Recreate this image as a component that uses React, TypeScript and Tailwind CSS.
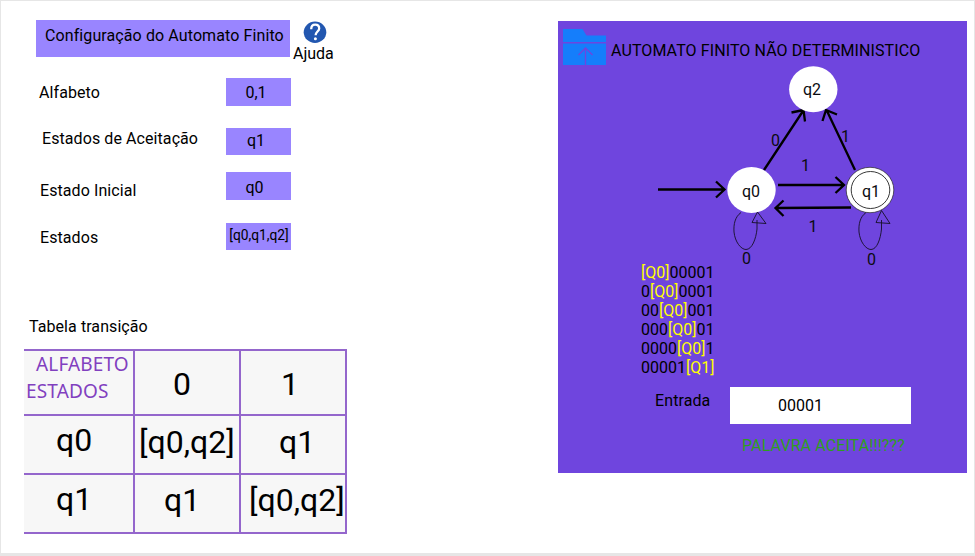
import type { ReactNode } from "react";

const params = [
  { label: "Alfabeto", value: "0,1", row: "mt-[21px] h-[28px]", lab: "pl-[3px] pt-[5px]", box: "h-[28px] pt-[5px]", txt: "text-[16px] pr-[5px]" },
  { label: "Estados de Aceitação", value: "q1", row: "mt-[22px] h-[27px]", lab: "pl-[6px] pt-[1px]", box: "h-[27px] pt-[3px]", txt: "text-[16px] pr-[5px]" },
  { label: "Estado Inicial", value: "q0", row: "mt-[17px] h-[28px]", lab: "pl-[4px] pt-[9px]", box: "h-[28px] pt-[6px]", txt: "text-[16px] pr-[8px]" },
  { label: "Estados", value: "[q0,q1,q2]", row: "mt-[23px] h-[27px]", lab: "pl-[4px] pt-[5px]", box: "h-[27px] pt-[2px]", txt: "text-[13.8px] pl-px" },
];

const steps = [
  ["", "[Q0]", "00001"],
  ["0", "[Q0]", "0001"],
  ["00", "[Q0]", "001"],
  ["000", "[Q0]", "01"],
  ["0000", "[Q0]", "1"],
  ["00001", "[Q1]", ""],
];

function Cell({ className, children }: { className: string; children: ReactNode }) {
  return (
    <div className={`border-b-2 border-r-2 border-[#9466cc] text-[32px] leading-[38px] whitespace-nowrap ${className}`}>
      {children}
    </div>
  );
}

function HelpIcon() {
  return (
    <svg width="24" height="24" viewBox="0 0 24 24" className="block">
      <ellipse cx="12" cy="11.3" rx="11.3" ry="10.7" fill="#2257b0" />
      <path d="M8.200 8.200C8.200 5 9.600 3.600 12.200 3.600s4 1.500 4 3.800c0 3-3.600 3.400-3.600 6.900" fill="none" stroke="#fff" strokeWidth="2.300" />
      <circle cx="12.400" cy="17.800" r="1.500" fill="#fff" />
    </svg>
  );
}

function FolderIcon() {
  return (
    <svg width="43" height="37" viewBox="0 0 43 37" className="block">
      <path d="M0 0h19.500l4 6.500h19.500v6.500H0zM0 14.500h43V36H0z" fill="#157efb" />
      <path d="M22.500 36V19M15.500 26l7-7 7 7" fill="none" stroke="#6f45de" strokeWidth="1.300" />
    </svg>
  );
}

function Diagram() {
  return (
    <svg width="260" height="205" viewBox="650 64 260 205" className="block" fontFamily="Roboto, sans-serif" fontSize="16">
      <g fill="none" stroke="#000" strokeWidth="2.300">
        <path d="M658 189.500H724M716 181.500l8.500 8-8.500 8" />
        <path d="M764 170L803 111M791.500 112.500l12-2.500 1.500 11.500" />
        <path d="M855 170L827 111M822.500 121l3.500-11 11 4.500" />
        <path d="M778 185H843M835.500 177l8.500 8-8.500 8" />
        <path d="M851 207.500L776 208M783.500 200.500l-8 7.500 8 8" />
      </g>
      <ellipse cx="813.300" cy="89.300" rx="24.200" ry="23" fill="#fff" />
      <ellipse cx="751.500" cy="190" rx="24.200" ry="23" fill="#fff" />
      <ellipse cx="870" cy="190" rx="23.800" ry="22.700" fill="#fff" stroke="#222" strokeWidth="0.700" />
      <ellipse cx="870.500" cy="190" rx="19.300" ry="18.500" fill="none" stroke="#222" strokeWidth="0.900" />
      <g fill="none" stroke="#151026" strokeWidth="0.900">
        <path d="M741 212.500C735 217 733.500 224 734 232C735 242 741 249.500 746 249.500C752 249.500 756 239 757 229V220M757.500 212l-5.500 10.500 14 1z" />
        <path d="M866 212.500C860 217 858.500 224 859 232C860 242 866 249.500 871 249.500C877 249.500 880.500 239 881.500 229V220M881.500 210.500l-5.500 12 14 1z" />
      </g>
      <g fill="#0b0b10">
        <text x="803" y="95">q2</text>
        <text x="742" y="197">q0</text>
        <text x="862" y="197">q1</text>
        <text x="771" y="146">0</text>
        <text x="841" y="142">1</text>
        <text x="801" y="171">1</text>
        <text x="808.500" y="231.500">1</text>
        <text x="742" y="264">0</text>
        <text x="867" y="265">0</text>
      </g>
    </svg>
  );
}

export default function App() {
  return (
    <div className="flex h-[556px] w-[975px] overflow-hidden border-b-[3px] border-l border-r border-t border-[#e6e6e6] bg-white font-['Roboto',sans-serif] text-[16px] leading-[19px] text-black">
      <section className="w-[557px] shrink-0 pt-[19px]">
        <div className="flex">
          <h1 className="ml-[35px] h-[37px] w-[254px] whitespace-nowrap bg-[#9985ff] pl-[9px] pt-[6px] tracking-[0.1px]">Configuração do Automato Finito</h1>
          <div className="ml-[3px] h-[44px] w-[44px]">
            <div className="pl-[10px] pt-px"><HelpIcon /></div>
            <div className="-mt-px">Ajuda</div>
          </div>
        </div>
        <div className="-mt-[7px] ml-[35px] w-[255px]">
          {params.map((p) => (
            <div key={p.label} className={`flex items-start justify-between ${p.row}`}>
              <span className={`tracking-[0.08px] ${p.lab}`}>{p.label}</span>
              <div className={`w-[65px] bg-[#9985ff] text-center ${p.box}`}>
                <span className={p.txt}>{p.value}</span>
              </div>
            </div>
          ))}
        </div>
        <h2 className="ml-[28px] mt-[67px] tracking-[0.07px]">Tabela transição</h2>
        <div className="ml-[23px] mt-[13px] grid w-[323px] grid-cols-[111px_106px_106px] grid-rows-[65px_59px_59px] border-t-2 border-[#9466cc] bg-[#f7f7f7]">
          <div className="border-b-2 border-r-2 border-[#9466cc] font-['Noto_Sans',sans-serif] text-[19px] leading-[27px] tracking-[0.15px] text-[#8140bf]">
            <div className="pl-[12px]">ALFABETO</div>
            <div className="pl-[2px]">ESTADOS</div>
          </div>
          <Cell className="pl-[38px] pt-[14px]">0</Cell>
          <Cell className="pl-[40px] pt-[14px]">1</Cell>
          <Cell className="pl-[32px] pt-[5px]">q0</Cell>
          <Cell className="pl-[4px] pt-[7px]">[q0,q2]</Cell>
          <Cell className="pl-[38px] pt-[7px]">q1</Cell>
          <Cell className="pl-[32px] pt-[5px]">q1</Cell>
          <Cell className="pl-[29px] pt-[6px]">q1</Cell>
          <Cell className="pl-[8px] pt-[6px]">[q0,q2]</Cell>
        </div>
      </section>
      <main className="mt-[20px] h-[452px] w-[409px] shrink-0 bg-[#6f45de]">
        <header className="flex h-[43px] pl-[5px] pt-[8px]">
          <FolderIcon />
          <div className="ml-[5px] mt-[12px] whitespace-nowrap tracking-[0.1px]">AUTOMATO FINITO NÃO DETERMINISTICO</div>
        </header>
        <div className="ml-[92px]"><Diagram /></div>
        <div className="-mt-[6px] ml-[83px]">
          {steps.map(([before, state, after]) => (
            <div key={before}>{before}<span className="text-[#ffff00]">{state}</span>{after}</div>
          ))}
        </div>
        <div className="mt-[10px] flex">
          <label className="ml-[97px] mt-[4px] w-[75px] tracking-[0.1px]">Entrada</label>
          <div className="h-[37px] w-[181px] bg-white pl-[48px] pt-[9px]">00001</div>
        </div>
        <div className="ml-[184px] mt-[12px] whitespace-nowrap tracking-[0.1px] text-[#2e9e20]">PALAVRA ACEITA!!!???</div>
      </main>
    </div>
  );
}
